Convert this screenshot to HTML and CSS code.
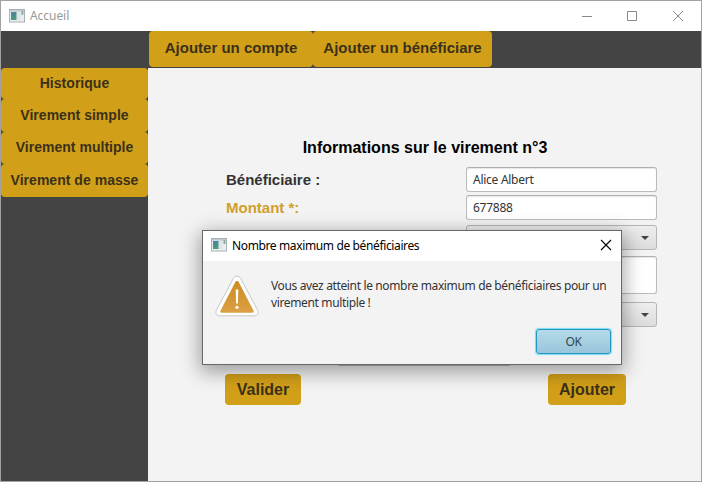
FILE: index.html
```html
<!DOCTYPE html>
<html lang="fr">
<head>
<meta charset="utf-8">
<title>Accueil</title>
<link rel="stylesheet" href="styles.css">
</head>
<body>
<svg class="defs" width="0" height="0" aria-hidden="true">
  <defs>
    <linearGradient id="pane" x1="0" y1="0" x2="0" y2="1"><stop offset="0" stop-color="#4a83a0"/><stop offset="1" stop-color="#4a9c7c"/></linearGradient>
    <linearGradient id="amber" x1="0" y1="0" x2="0" y2="1"><stop offset="0" stop-color="#cd8b22"/><stop offset="1" stop-color="#dba043"/></linearGradient>
    <symbol id="app" viewBox="0 0 16 14">
      <rect x=".5" y=".5" width="15" height="12.5" fill="#eceff0" stroke="#a9b0b4"/>
      <rect x="1" y="1" width="14" height="1.6" fill="#c3c9d2"/>
      <rect x="2" y="3" width="5.5" height="8" fill="url(#pane)"/>
      <rect x="8" y="3" width="3.5" height="8" fill="#dde5e6"/>
      <rect x="12.5" y="2" width="1.8" height="4" fill="#7fa79d"/>
    </symbol>
  </defs>
</svg>
<div class="window">
  <header class="titlebar">
    <svg class="app-icon" width="16" height="14"><use href="#app"/></svg>
    <span class="caption">Accueil</span>
    <svg class="controls" width="102" height="12" viewBox="0 0 102 12" fill="none" stroke="#888">
      <path d="M0 6.500h10M45.500 1.500h9v9h-9z"/><path d="M91 1l10 10M101 1l-10 10"/>
    </svg>
  </header>
  <nav class="topbar">
    <button class="tab compte">Ajouter un compte</button><button class="tab benef">Ajouter un bénéficiare</button>
  </nav>
  <div class="body">
    <aside class="sidebar">
      <button class="side first">Historique</button>
      <button class="side">Virement simple</button>
      <button class="side">Virement multiple</button>
      <button class="side last">Virement de masse</button>
    </aside>
    <main class="content">
      <h1>Informations sur le virement n°3</h1>
      <div class="form">
        <label>Bénéficiaire :</label><div class="field">Alice Albert</div>
        <label class="required">Montant *:</label><div class="field">677888</div>
        <span></span><div class="combo"></div>
        <span></span><div class="field area"></div>
        <span></span><div class="combo"></div>
      </div>
      <div class="date"><span class="date-button"></span></div>
      <div class="actions">
        <button class="action valider">Valider</button>
        <button class="action ajouter">Ajouter</button>
      </div>
    </main>
  </div>
</div>
<section class="dialog">
  <header class="dialog-title">
    <svg class="app-icon" width="16" height="14"><use href="#app"/></svg>
    <span class="dialog-caption">Nombre maximum de bénéficiaires</span>
    <svg class="close" width="12" height="12" viewBox="0 0 12 12" stroke="#000" stroke-width="1.1"><path d="M1 1l10 10M11 1L1 11"/></svg>
  </header>
  <div class="message">
    <svg class="warning" width="44" height="42" viewBox="0 0 44 42">
      <path d="M22 1.2c-1.7 0-2.8.8-3.8 2.5L1.7 34.6C-.1 38 1 40.8 4.7 40.8h34.6c3.7 0 4.8-2.8 3-6.200L25.800 3.700C24.800 2 23.700 1.200 22 1.200z" fill="#fff" stroke="#c6c6c6"/>
      <path d="M22 6c-.8 0-1.300.4-1.800 1.300L5.700 35.300c-.8 1.600-.3 2.400 1.300 2.400h30c1.600 0 2.100-.8 1.300-2.400L23.800 7.300C23.300 6.400 22.800 6 22 6z" fill="url(#amber)"/>
      <path d="M20.700 14.500h2.600l-.4 14h-1.800z" fill="#fff"/><circle cx="22" cy="32.300" r="1.600" fill="#fff"/>
    </svg>
    <p>Vous avez atteint le nombre maximum de bénéficiaires pour un<br>virement multiple !</p>
  </div>
  <button class="ok">OK</button>
</section>
</body>
</html>
```
FILE: styles.css
```css
* { box-sizing: border-box; }
body { margin: 0; width: 702px; height: 482px; overflow: hidden; font: 12px "Noto Sans", "Open Sans", sans-serif; color: #333; }
.defs { position: absolute; }
button { border: 0; padding: 0; margin: 0; font-family: "Liberation Sans", Arial, sans-serif; font-weight: bold; color: #3a3118; background: #d29f19; border-radius: 4px; white-space: nowrap; }
.window { width: 702px; height: 482px; border: 1px solid #a2a2a2; background: #f3f3f3; display: flex; flex-direction: column; }
.titlebar { height: 30px; flex: none; background: #fff; display: flex; align-items: center; padding: 0 17px 0 8px; color: #999; }
.app-icon { flex: none; display: block; }
.caption { margin-left: 5px; letter-spacing: -.05px; padding-bottom: 1px; }
.controls { margin-left: auto; }
.topbar { height: 37px; flex: none; background: #444; padding-left: 148px; display: flex; }
.tab { height: 36px; font-size: 15px; padding-bottom: 4px; }
.compte { width: 164px; }
.benef { width: 179px; }
.body { flex: 1; display: flex; min-height: 0; }
.sidebar { width: 147px; background: #444; display: flex; flex-direction: column; }
.side { height: 32.5px; font-size: 14px; letter-spacing: .03px; padding-bottom: 1px; }
.side.first { height: 31px; }
.side.last { height: 33px; }
.content { flex: 1; padding: 69px 44px 0 77px; }
h1 { margin: 0; font: bold 16px/21px "Liberation Sans", Arial, sans-serif; color: #000; text-align: center; padding-right: 32px; white-space: nowrap; }
.form { margin-top: 9px; display: grid; grid-template-columns: 241px 191px; grid-template-rows: 25px 27px 28px 43px 25px; row-gap: 3px; }
label { font: bold 15px/25px "Liberation Sans", Arial, sans-serif; padding-left: 1px; }
.required { color: #d0a02b; }
.field { height: 25px; border: 1px solid #bbb; border-top-color: #b0b0b0; border-radius: 3px; background: #fff; box-shadow: inset 0 1px 1px #e6e6e6; padding-left: 6px; line-height: 24px; letter-spacing: -.27px; }
.area { height: 38px; }
.combo { height: 25px; border: 1px solid #b5b5b5; border-radius: 3px; background: linear-gradient(#eee, #dcdcdc); display: flex; align-items: center; justify-content: flex-end; padding-right: 7px; }
.combo::after { content: ""; border: 4px solid transparent; border-top-color: #444; border-bottom: 0; }
.date { margin: 14px 0 0 112px; width: 175px; height: 25px; border: 1px solid #b5b5b5; border-radius: 3px; background: #fff; display: flex; justify-content: flex-end; }
.date-button { width: 25px; border-left: 1px solid #b5b5b5; background: #ddd; }
.actions { margin-top: 8px; width: 401px; display: flex; justify-content: space-between; }
.action { height: 31px; font-size: 16px; }
.valider { width: 76px; }
.ajouter { width: 78px; }
.dialog { position: absolute; left: 202px; top: 230px; width: 420px; height: 135px; border: 1px solid #686868; background: #f3f3f3; box-shadow: 0 5px 18px 2px rgba(0,0,0,.36); display: flex; flex-direction: column; }
.dialog-title { height: 30px; flex: none; background: #fff; color: #000; display: flex; align-items: center; padding: 0 9px 0 8px; }
.dialog-title .app-icon, .close { margin-bottom: 2px; }
.dialog-caption { margin-left: 5px; letter-spacing: -.37px; white-space: nowrap; padding-bottom: 1px; }
.close { margin-left: auto; }
.message { display: flex; padding: 14px 0 0 12px; height: 67px; flex: none; }
.warning { flex: none; }
.message p { margin: 2px 0 0 12px; line-height: 17px; letter-spacing: -.36px; white-space: nowrap; }
.ok { align-self: flex-end; width: 75px; height: 25px; margin: 1px 10px 0 0; border: 1px solid #2398be; border-radius: 3px; background: linear-gradient(#b5dbe9, #99c4db); box-shadow: 0 0 1px 1px #7edcf5; font: 12px "Noto Sans", sans-serif; letter-spacing: -.3px; color: #30454f; }
```
